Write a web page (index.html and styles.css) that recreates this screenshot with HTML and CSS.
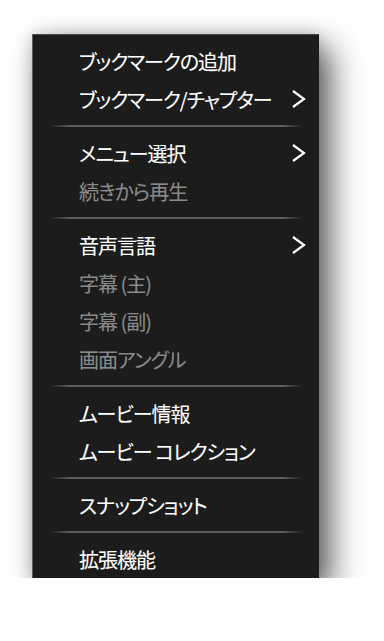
FILE: index.html
```html
<!DOCTYPE html>
<html lang="ja">
<head>
    <meta charset="UTF-8">
    <meta name="viewport" content="width=device-width, initial-scale=1.0">
    <link rel="stylesheet" href="styles.css">
    <title>メニュー</title>
</head>
<body>
    <div class="menu">
        <div class="item">ブックマークの追加</div>
        <div class="item">ブックマーク/チャプター<svg class="arrow" viewBox="0 0 15 20"><polyline points="2,2 13,10 2,18"/></svg></div>
        <div class="sep"></div>
        <div class="item">メニュー選択<svg class="arrow" viewBox="0 0 15 20"><polyline points="2,2 13,10 2,18"/></svg></div>
        <div class="item disabled">続きから再生</div>
        <div class="sep"></div>
        <div class="item">音声言語<svg class="arrow" viewBox="0 0 15 20"><polyline points="2,2 13,10 2,18"/></svg></div>
        <div class="item disabled">字幕 (主)</div>
        <div class="item disabled">字幕 (副)</div>
        <div class="item disabled">画面アングル</div>
        <div class="sep"></div>
        <div class="item">ムービー情報</div>
        <div class="item">ムービー コレクション</div>
        <div class="sep"></div>
        <div class="item">スナップショット</div>
        <div class="sep"></div>
        <div class="item">拡張機能</div>
    </div>
</body>
</html>
```

FILE: styles.css
```css
* {
    box-sizing: border-box;
}

body {
    margin: 0;
    background-color: #ffffff;
    font-family: "Noto Sans CJK JP", "Noto Sans", sans-serif;
}

.menu {
    width: 287px;
    margin: 34px 0 0 32px;
    padding-top: 7px;
    background-color: #1c1c1c;
    border-left: 1px solid #5e5e5e;
    border-top: 1px solid #4a4a4a;
    box-shadow: 12px 14px 30px rgba(0, 0, 0, 0.62), 0 0 16px rgba(0, 0, 0, 0.18);
}

.item {
    display: flex;
    align-items: center;
    justify-content: space-between;
    height: 38px;
    padding: 0 13px 0 46px;
    color: #ffffff;
    font-size: 20px;
    letter-spacing: -1px;
    font-feature-settings: "palt";
    -webkit-text-stroke: 0.1px currentColor;
    white-space: nowrap;
}

.item.disabled {
    color: #8a8a8a;
}

.arrow {
    width: 15px;
    height: 20px;
    fill: none;
    stroke: #ffffff;
    stroke-width: 2.2;
}

.sep {
    height: 16px;
    padding: 7px 16px 0 17px;
}

.sep::before {
    content: "";
    display: block;
    height: 2px;
    background: linear-gradient(to right, rgba(110, 110, 110, 0), #5e5e5e 8%, #5e5e5e 92%, rgba(110, 110, 110, 0));
}
```
